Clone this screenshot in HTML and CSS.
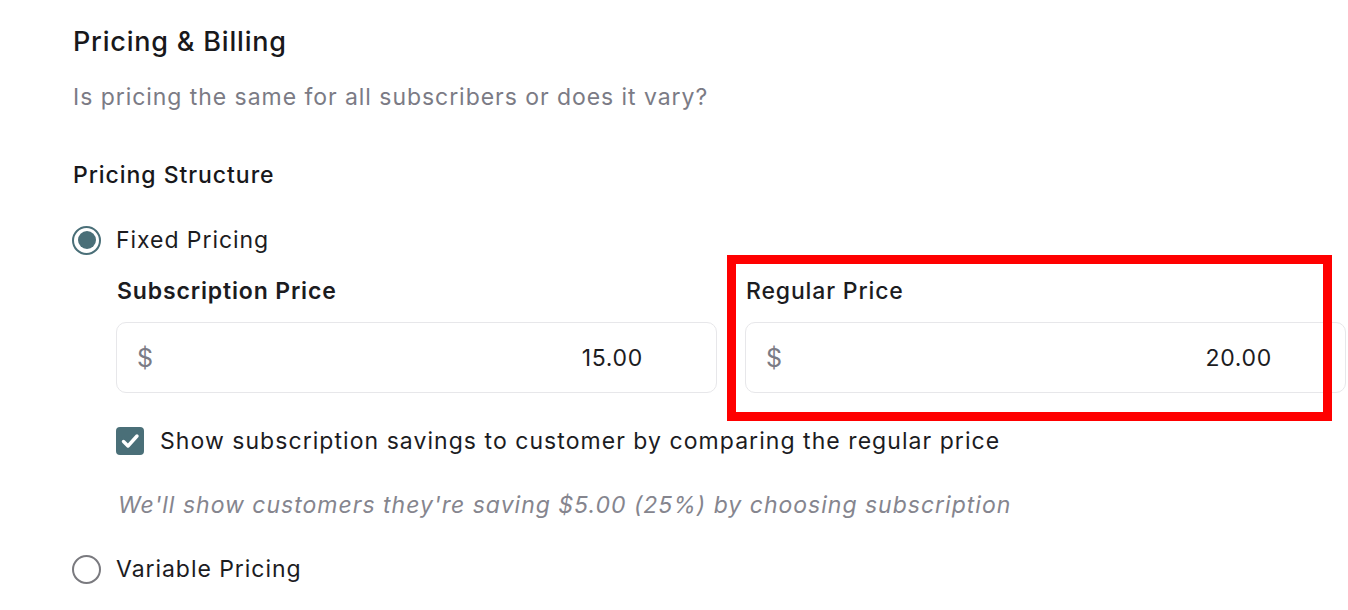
FILE: index.html
```html
<!DOCTYPE html>
<html lang="en">
<head>
<meta charset="utf-8">
<title>Pricing &amp; Billing</title>
<link rel="stylesheet" href="styles.css">
</head>
<body>
<main class="page">
  <h1 class="title">Pricing &amp; Billing</h1>
  <p class="subtitle">Is pricing the same for all subscribers or does it vary?</p>

  <h2 class="section">Pricing Structure</h2>

  <label class="radio-row first">
    <span class="radio checked"><span class="dot"></span></span>
    <span class="radio-label">Fixed Pricing</span>
  </label>

  <div class="fixed-body">
    <div class="fields">
      <div class="field">
        <div class="field-label strong">Subscription Price</div>
        <div class="input">
          <span class="prefix">$</span>
          <span class="value">15.00</span>
        </div>
      </div>
      <div class="field highlighted">
        <div class="field-label">Regular Price</div>
        <div class="input">
          <span class="prefix">$</span>
          <span class="value">20.00</span>
        </div>
        <div class="highlight-box"></div>
      </div>
    </div>

    <label class="check-row">
      <span class="checkbox">
        <svg viewBox="0 0 28 28" width="28" height="28" aria-hidden="true">
          <path d="M7.5 14.5 L12 19 L21 9" fill="none" stroke="#fff" stroke-width="3.4" stroke-linecap="round" stroke-linejoin="round"/>
        </svg>
      </span>
      <span class="check-label">Show subscription savings to customer by comparing the regular price</span>
    </label>

    <p class="hint">We'll show customers they're saving $5.00 (25%) by choosing subscription</p>
  </div>

  <label class="radio-row last">
    <span class="radio"></span>
    <span class="radio-label">Variable Pricing</span>
  </label>
</main>
</body>
</html>
```

FILE: styles.css
```css
* { box-sizing: border-box; }

html, body {
  margin: 0;
  padding: 0;
  background: #ffffff;
}

body {
  font-family: Inter, "Noto Sans", "Liberation Sans", sans-serif;
  color: #1c1c1f;
  overflow: hidden;
  letter-spacing: 0.95px;
}

.page {
  padding: 26px 2px 0 73px;
}

.title {
  margin: 0;
  font-size: 27px;
  line-height: 32px;
  font-weight: 500;
  color: #18181b;
  letter-spacing: 0.8px;
}

.subtitle {
  margin: 24px 0 0;
  font-size: 23px;
  line-height: 30px;
  color: #7b7b85;
}

.section {
  margin: 48px 0 0;
  font-size: 23px;
  line-height: 30px;
  font-weight: 500;
  color: #18181b;
}

.radio-row {
  display: flex;
  align-items: center;
  gap: 15px;
  height: 30px;
}

.radio-row.first { margin-top: 35px; }
.radio-row.last { margin-top: 34px; }

.radio {
  width: 29px;
  height: 29px;
  border-radius: 50%;
  border: 2px solid #7a7a7f;
  display: flex;
  align-items: center;
  justify-content: center;
  flex: none;
  margin-left: -1px;
}

.radio.checked {
  border-color: #4a6f78;
}

.radio .dot {
  width: 18px;
  height: 18px;
  border-radius: 50%;
  background: #4a6f78;
}

.radio-label {
  font-size: 23px;
  line-height: 30px;
  color: #1c1c1f;
}

.fixed-body {
  padding-left: 43px;
}

.fields {
  display: grid;
  grid-template-columns: 1fr 1fr;
  column-gap: 28px;
  margin-top: 21px;
}

.field {
  position: relative;
}

.field-label {
  font-size: 23px;
  line-height: 30px;
  font-weight: 500;
  color: #1c1c1f;
  padding-left: 1px;
  letter-spacing: 0.85px;
}

.field-label.strong {
  font-weight: 600;
}

.input {
  margin-top: 16px;
  height: 71px;
  border: 1.5px solid #e7e7ea;
  border-radius: 10px;
  display: flex;
  align-items: center;
  justify-content: space-between;
  padding: 0 73px 0 20px;
  background: #fff;
}

.prefix {
  font-size: 25px;
  color: #7b7b85;
}

.value {
  font-size: 23px;
  color: #1c1c1f;
  letter-spacing: 0.7px;
}

.highlight-box {
  position: absolute;
  left: -18px;
  top: -21px;
  width: 605px;
  height: 166px;
  border: 9px solid #ff0000;
  pointer-events: none;
}

.check-row {
  display: flex;
  align-items: center;
  gap: 16px;
  margin-top: 33px;
  height: 30px;
}

.checkbox {
  width: 28px;
  height: 28px;
  border-radius: 4px;
  background: #4a6f78;
  flex: none;
  display: flex;
}

.check-label {
  font-size: 23px;
  line-height: 30px;
  color: #1c1c1f;
  letter-spacing: 1.05px;
}

.hint {
  margin: 34px 0 0;
  padding-left: 2px;
  font-size: 23px;
  line-height: 30px;
  font-style: italic;
  color: #85858e;
  letter-spacing: 1px;
}
```
